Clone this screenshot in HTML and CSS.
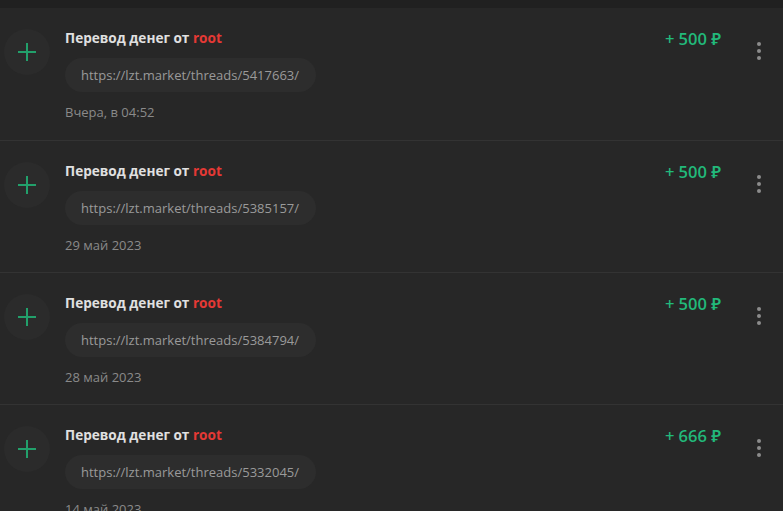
FILE: index.html
```html
<!DOCTYPE html>
<html lang="ru">
<head>
    <meta charset="UTF-8">
    <meta name="viewport" content="width=device-width, initial-scale=1.0">
    <title>Платежи</title>
    <link rel="stylesheet" href="styles.css">
</head>
<body>
    <div class="top-strip"></div>
    <div class="payments">
        <div class="payment">
            <div class="payment-icon">
                <svg width="18" height="18" viewBox="0 0 18 18"><path d="M9 0v18M0 9h18" stroke="#22a06b" stroke-width="2"/></svg>
            </div>
            <div class="payment-body">
                <div class="payment-title">Перевод денег от <span class="user">root</span></div>
                <div class="payment-link">https://lzt.market/threads/5417663/</div>
                <div class="payment-date">Вчера, в 04:52</div>
            </div>
            <div class="payment-amount">+ 500 ₽</div>
            <div class="payment-menu"><span></span><span></span><span></span></div>
        </div>
        <div class="payment">
            <div class="payment-icon">
                <svg width="18" height="18" viewBox="0 0 18 18"><path d="M9 0v18M0 9h18" stroke="#22a06b" stroke-width="2"/></svg>
            </div>
            <div class="payment-body">
                <div class="payment-title">Перевод денег от <span class="user">root</span></div>
                <div class="payment-link">https://lzt.market/threads/5385157/</div>
                <div class="payment-date">29 май 2023</div>
            </div>
            <div class="payment-amount">+ 500 ₽</div>
            <div class="payment-menu"><span></span><span></span><span></span></div>
        </div>
        <div class="payment">
            <div class="payment-icon">
                <svg width="18" height="18" viewBox="0 0 18 18"><path d="M9 0v18M0 9h18" stroke="#22a06b" stroke-width="2"/></svg>
            </div>
            <div class="payment-body">
                <div class="payment-title">Перевод денег от <span class="user">root</span></div>
                <div class="payment-link">https://lzt.market/threads/5384794/</div>
                <div class="payment-date">28 май 2023</div>
            </div>
            <div class="payment-amount">+ 500 ₽</div>
            <div class="payment-menu"><span></span><span></span><span></span></div>
        </div>
        <div class="payment">
            <div class="payment-icon">
                <svg width="18" height="18" viewBox="0 0 18 18"><path d="M9 0v18M0 9h18" stroke="#22a06b" stroke-width="2"/></svg>
            </div>
            <div class="payment-body">
                <div class="payment-title">Перевод денег от <span class="user">root</span></div>
                <div class="payment-link">https://lzt.market/threads/5332045/</div>
                <div class="payment-date">14 май 2023</div>
            </div>
            <div class="payment-amount">+ 666 ₽</div>
            <div class="payment-menu"><span></span><span></span><span></span></div>
        </div>
    </div>
</body>
</html>
```

FILE: styles.css
```css
body {
    margin: 0;
    background-color: #272727;
    font-family: "Open Sans", "Noto Sans", sans-serif;
    overflow: hidden;
}

.top-strip {
    height: 8px;
    background-color: #202020;
}

.payment {
    display: flex;
    align-items: flex-start;
    height: 132px;
    padding-left: 4px;
    box-sizing: border-box;
}

.payment + .payment {
    border-top: 1px solid #333333;
}

.payment-icon {
    width: 46px;
    height: 46px;
    margin-top: 21px;
    border-radius: 50%;
    background-color: #2b2b2b;
    display: flex;
    justify-content: center;
    align-items: center;
    flex-shrink: 0;
}

.payment-body {
    flex: 1;
    margin-left: 15px;
    padding-top: 21px;
}

.payment-title {
    font-size: 13.6px;
    font-weight: bold;
    line-height: 18px;
    color: #e0e0e0;
}

.user {
    color: #e53935;
}

.payment-link {
    display: inline-block;
    margin-top: 11px;
    padding: 0 17px 0 16px;
    height: 34px;
    line-height: 34px;
    border-radius: 17px;
    background-color: #2d2d2d;
    font-size: 13px;
    color: #9a9a9a;
}

.payment-date {
    margin-top: 12px;
    font-size: 13px;
    line-height: 17px;
    color: #8a8a8a;
}

.payment-amount {
    padding-top: 20px;
    font-size: 16.5px;
    font-weight: 600;
    line-height: 21px;
    color: #22b97a;
}

.payment-menu {
    width: 24px;
    margin: 34px 12px 0 26px;
    display: flex;
    flex-direction: column;
    align-items: center;
    gap: 3px;
}

.payment-menu span {
    width: 4px;
    height: 4px;
    border-radius: 50%;
    background-color: #8c8c8c;
}
```
